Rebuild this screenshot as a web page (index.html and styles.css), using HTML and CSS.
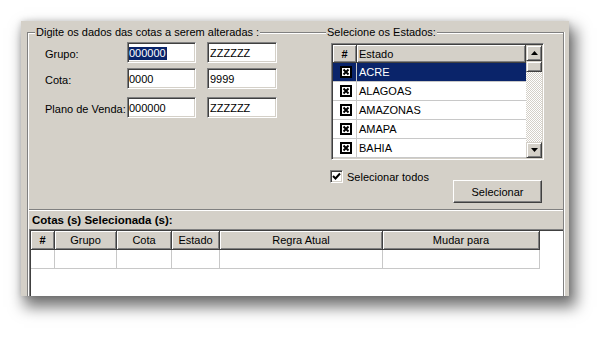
FILE: index.html
```html
<!DOCTYPE html>
<html lang="pt">
<head>
<meta charset="utf-8">
<title>Cotas</title>
<link rel="stylesheet" href="styles.css">
</head>
<body>
<div class="dialog">
  <div class="frame">
    <div class="legends">
      <span class="legend first">Digite os dados das cotas a serem alteradas :</span>
      <span class="legend">Selecione os Estados:</span>
    </div>
    <div class="top">
      <div class="form">
        <div class="frow"><span class="lbl">Grupo:</span><span class="field"><span class="sel">000000</span></span><span class="field f2">ZZZZZZ</span></div>
        <div class="frow"><span class="lbl">Cota:</span><span class="field">0000</span><span class="field f2">9999</span></div>
        <div class="frow r3"><span class="lbl">Plano de Venda:</span><span class="field">000000</span><span class="field f2">ZZZZZZ</span></div>
      </div>
      <div class="states">
        <div class="slist">
          <div class="scols">
            <div class="shead"><span class="hc hnum">#</span><span class="hc hest">Estado</span></div>
            <div class="srow selected"><span class="c cnum"><svg class="xbox" width="12" height="12" viewBox="0 0 12 12"><rect x="1" y="1" width="10" height="10" fill="#fff" stroke="#000" stroke-width="2"/><path d="M3.5 3.5 L8.5 8.5 M8.5 3.5 L3.5 8.5" stroke="#000" stroke-width="2"/></svg></span><span class="c cest">ACRE</span></div>
            <div class="srow"><span class="c cnum"><svg class="xbox" width="12" height="12" viewBox="0 0 12 12"><rect x="1" y="1" width="10" height="10" fill="#fff" stroke="#000" stroke-width="2"/><path d="M3.5 3.5 L8.5 8.5 M8.5 3.5 L3.5 8.5" stroke="#000" stroke-width="2"/></svg></span><span class="c cest">ALAGOAS</span></div>
            <div class="srow"><span class="c cnum"><svg class="xbox" width="12" height="12" viewBox="0 0 12 12"><rect x="1" y="1" width="10" height="10" fill="#fff" stroke="#000" stroke-width="2"/><path d="M3.5 3.5 L8.5 8.5 M8.5 3.5 L3.5 8.5" stroke="#000" stroke-width="2"/></svg></span><span class="c cest">AMAZONAS</span></div>
            <div class="srow"><span class="c cnum"><svg class="xbox" width="12" height="12" viewBox="0 0 12 12"><rect x="1" y="1" width="10" height="10" fill="#fff" stroke="#000" stroke-width="2"/><path d="M3.5 3.5 L8.5 8.5 M8.5 3.5 L3.5 8.5" stroke="#000" stroke-width="2"/></svg></span><span class="c cest">AMAPA</span></div>
            <div class="srow"><span class="c cnum"><svg class="xbox" width="12" height="12" viewBox="0 0 12 12"><rect x="1" y="1" width="10" height="10" fill="#fff" stroke="#000" stroke-width="2"/><path d="M3.5 3.5 L8.5 8.5 M8.5 3.5 L3.5 8.5" stroke="#000" stroke-width="2"/></svg></span><span class="c cest">BAHIA</span></div>
          </div>
          <div class="vscroll">
            <div class="sbtn"><svg width="7" height="4" viewBox="0 0 7 4"><path d="M3.5 0 L7 4 L0 4 Z" fill="#000"/></svg></div>
            <div class="sbtn thumb"></div>
            <div class="track"></div>
            <div class="sbtn"><svg width="7" height="4" viewBox="0 0 7 4"><path d="M0 0 L7 0 L3.5 4 Z" fill="#000"/></svg></div>
          </div>
        </div>
        <div class="actions">
          <label class="chk"><span class="box"><svg width="11" height="11" viewBox="0 0 11 11"><path d="M2 5 L4.5 7.5 L9 2.5" fill="none" stroke="#000" stroke-width="2"/></svg></span>Selecionar todos</label>
          <button class="btn" type="button">Selecionar</button>
        </div>
      </div>
    </div>
    <div class="panel">Cotas (s) Selecionada (s):</div>
    <div class="grid">
      <div class="ghead">
        <span class="hc gh w1 bold">#</span>
        <span class="hc gh w2">Grupo</span>
        <span class="hc gh w3">Cota</span>
        <span class="hc gh w4">Estado</span>
        <span class="hc gh w5">Regra Atual</span>
        <span class="hc gh w6">Mudar para</span>
      </div>
      <div class="grow">
        <span class="gc w1"></span>
        <span class="gc w2"></span>
        <span class="gc w3"></span>
        <span class="gc w4"></span>
        <span class="gc w5"></span>
        <span class="gc w6"></span>
      </div>
    </div>
  </div>
</div>
</body>
</html>
```

FILE: styles.css
```css
html, body {
  margin: 0;
  background: #fff;
}
body {
  height: 338px;
  box-sizing: border-box;
  padding: 21px 0 0 21px;
  font: 11px "Liberation Sans", Arial, sans-serif;
  color: #000;
}
.dialog {
  width: 548px;
  height: 275px;
  box-sizing: border-box;
  background: #d4d0c8;
  box-shadow: 5px 9px 14px 2px rgba(0,0,0,0.55), 0 0 6px rgba(0,0,0,0.15);
  overflow: hidden;
  display: flex;
  flex-direction: column;
  padding: 11px 0 0 6px;
}
.frame {
  width: 537px;
  box-sizing: border-box;
  border: 1px solid #808080;
  border-bottom: none;
  box-shadow: inset 1px 1px 0 #fff, 1px 0 0 #fff;
  flex: 1;
  min-height: 0;
  display: flex;
  flex-direction: column;
}
.legends {
  display: grid;
  grid-template-columns: 298px auto;
  margin-top: -7px;
  height: 13px;
  line-height: 13px;
}
.legend {
  background: #d4d0c8;
  padding: 0 1px;
  justify-self: start;
}
.legend.first { margin-left: 7px; }

.top {
  display: flex;
  align-items: flex-start;
}
.form {
  margin: 3px 0 0 17px;
  display: flex;
  flex-direction: column;
  gap: 5px;
}
.frow {
  display: flex;
  align-items: center;
  height: 21px;
}
.frow.r3 { margin-top: 3px; }
.lbl {
  width: 82px;
  padding-top: 2px;
}
.field {
  width: 69px;
  height: 21px;
  box-sizing: border-box;
  background: #fff;
  border: 1px solid;
  border-color: #808080 #fff #fff #808080;
  box-shadow: inset 1px 1px 0 #404040, inset -1px -1px 0 #d4d0c8;
  padding: 1px 0 0 1px;
  display: flex;
  align-items: center;
  line-height: 13px;
}
.field.f2 {
  width: 70px;
  margin-left: 11px;
  padding-left: 2px;
}
.sel {
  background: #0a246a;
  color: #fff;
  padding-right: 1px;
}

.states {
  margin: 4px 19px 0 auto;
  width: 213px;
}
.slist {
  height: 117px;
  box-sizing: border-box;
  border: 1px solid;
  border-color: #808080 #fff #fff #808080;
  box-shadow: inset 1px 1px 0 #404040, inset -1px -1px 0 #d4d0c8;
  padding: 1px;
  display: flex;
  background: #fff;
  overflow: hidden;
}
.scols {
  flex: 1;
  overflow: hidden;
}
.shead {
  display: flex;
  height: 18px;
}
.hc {
  background: #d4d0c8;
  box-sizing: border-box;
  border-right: 1px solid #404040;
  border-bottom: 1px solid #404040;
  box-shadow: inset 1px 1px 0 #fff, inset -1px -1px 0 #808080;
  display: flex;
  align-items: center;
}
.hnum {
  width: 24px;
  justify-content: center;
  font-weight: bold;
}
.hest {
  flex: 1;
  padding-left: 2px;
}
.srow {
  display: flex;
  height: 19px;
  box-sizing: border-box;
  border-bottom: 1px solid #c8c8c8;
}
.srow.selected {
  background: #0a246a;
  color: #fff;
}
.c {
  display: flex;
  align-items: center;
}
.cnum {
  width: 24px;
  box-sizing: border-box;
  justify-content: center;
  border-right: 1px solid #c8c8c8;
  padding-left: 2px;
}
.cest { padding-left: 2px; }

.vscroll {
  width: 16px;
  display: flex;
  flex-direction: column;
}
.sbtn {
  height: 16px;
  box-sizing: border-box;
  background: #d4d0c8;
  border: 1px solid;
  border-color: #d4d0c8 #404040 #404040 #d4d0c8;
  box-shadow: inset 1px 1px 0 #fff, inset -1px -1px 0 #808080;
  display: flex;
  align-items: center;
  justify-content: center;
  flex: none;
}
.sbtn.thumb { height: 11px; }
.track {
  flex: 1;
  background: repeating-conic-gradient(#fff 0% 25%, #d4d0c8 0% 50%) 0 0 / 2px 2px;
}

.actions {
  display: flex;
  align-items: flex-start;
  justify-content: space-between;
  margin-top: 10px;
}
.chk {
  display: flex;
  align-items: center;
  gap: 4px;
  height: 13px;
  margin-left: -1px;
}
.box {
  width: 13px;
  height: 13px;
  box-sizing: border-box;
  border: 1px solid;
  border-color: #808080 #fff #fff #808080;
  box-shadow: inset 1px 1px 0 #404040, inset -1px -1px 0 #d4d0c8;
  background: #fff;
  display: flex;
  align-items: center;
  justify-content: center;
}
.btn {
  margin: 10px 2px 0 0;
  width: 89px;
  height: 23px;
  box-sizing: border-box;
  font: inherit;
  color: #000;
  background: #d4d0c8;
  border: 1px solid;
  border-color: #fff #404040 #404040 #fff;
  box-shadow: inset -1px -1px 0 #808080;
  padding: 0;
}

.panel {
  margin: 6px 0 0 1px;
  height: 20px;
  box-sizing: border-box;
  border-top: 1px solid #808080;
  box-shadow: inset 0 1px 0 #fff;
  font-weight: bold;
  font-size: 11.5px;
  padding-left: 3px;
  display: flex;
  align-items: center;
}
.grid {
  margin-left: 1px;
  flex: 1;
  background: #fff;
  border-top: 1px solid #808080;
  border-left: 1px solid #808080;
  box-shadow: inset 1px 1px 0 #404040;
  padding: 1px 0 0 1px;
}
.ghead, .grow {
  display: flex;
  height: 19px;
}
.gh { justify-content: center; }
.bold { font-weight: bold; }
.gc {
  box-sizing: border-box;
  border-right: 1px solid #c8c8c8;
  border-bottom: 1px solid #c8c8c8;
}
.w1 { width: 24px; }
.w2 { width: 62px; }
.w3 { width: 55px; }
.w4 { width: 48px; }
.w5 { width: 163px; }
.w6 { width: 157px; }
```
